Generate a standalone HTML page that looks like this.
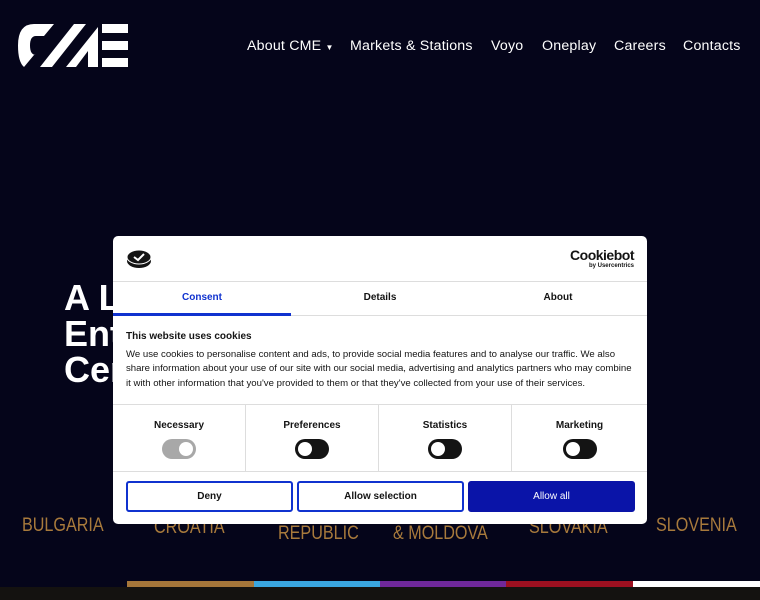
<!DOCTYPE html>
<html><head><style>
*{margin:0;padding:0;box-sizing:border-box}
body{width:760px;height:600px;background:#05051a;font-family:"Liberation Sans",sans-serif;position:relative;overflow:hidden;color:#fff}
.nav{position:absolute;top:38px;font-size:14.2px;color:#fff;letter-spacing:0.2px}
.hero{position:absolute;left:64px;top:280px;font-size:36px;font-weight:bold;line-height:36px;color:#fff}
.c{position:absolute;top:516px;font-size:19px;color:#a87a3c;text-align:center;line-height:20px;transform:scaleX(0.85);transform-origin:left top}
.bar{position:absolute;top:581px;height:6px}
.dlg{position:absolute;left:113px;top:236px;width:534px;height:288px;background:#fff;border-radius:5px;color:#141414}
.tab{position:absolute;top:56px;font-size:10px;font-weight:bold;width:178px;text-align:center}
.tg{position:absolute;top:168px;height:68px;width:133px;border-right:1px solid #ddd;text-align:center;font-size:10px;font-weight:bold;padding-top:16px}
.sw{width:34px;height:20px;border-radius:10px;background:#141414;margin:8px auto 0;position:relative}
.sw i{position:absolute;left:3px;top:3px;width:14px;height:14px;border-radius:50%;background:#fff}
.btn{position:absolute;top:245px;width:167px;height:31px;border:2px solid #1032cf;border-radius:3px;font-size:10px;font-weight:bold;text-align:center;line-height:27px}
</style></head><body>
<svg style="position:absolute;left:18px;top:24px" width="110" height="43" viewBox="0 0 110 43">
<path d="M16 0H36L26 12H18Q12 12 12 21.5Q12 31 18 31H16L6 43Q0 38 0 21.5Q0 0 16 0Z" fill="#fff"/>
<path d="M22 43L56 0H68L34 43Z" fill="#fff"/>
<path d="M48 43L80 3V43H70V27L58 43Z" fill="#fff"/>
<rect x="84" y="0" width="26" height="9" fill="#fff"/><rect x="84" y="17" width="26" height="9" fill="#fff"/><rect x="84" y="34" width="26" height="9" fill="#fff"/>
</svg>
<div class="nav" style="left:247px">About CME <span style="font-size:8px">▼</span></div>
<div class="nav" style="left:350px">Markets &amp; Stations</div>
<div class="nav" style="left:491px">Voyo</div>
<div class="nav" style="left:542px">Oneplay</div>
<div class="nav" style="left:614px">Careers</div>
<div class="nav" style="left:683px">Contacts</div>
<div class="hero">A Leading<br>Entertainment<br>Central Europe</div>
<div class="c" style="left:22px">BULGARIA</div>
<div class="c" style="left:154px;top:518px">CROATIA</div>
<div class="c" style="left:278px;top:504px">CZECH<br>REPUBLIC</div>
<div class="c" style="left:393px;top:504px">ROMANIA<br>&amp; MOLDOVA</div>
<div class="c" style="left:529px;top:518px">SLOVAKIA</div>
<div class="c" style="left:656px">SLOVENIA</div>
<div class="bar" style="left:127px;width:127px;background:#a5763a"></div>
<div class="bar" style="left:254px;width:126px;background:#3aa6e0"></div>
<div class="bar" style="left:380px;width:126px;background:#70289a"></div>
<div class="bar" style="left:506px;width:127px;background:#9c1020"></div>
<div class="bar" style="left:633px;width:127px;background:#fff"></div>
<div style="position:absolute;left:0;top:587px;width:760px;height:13px;background:#141210"></div>
<div class="dlg">
<svg style="position:absolute;left:13px;top:13px" width="26" height="20" viewBox="0 0 26 20"><ellipse cx="13" cy="12" rx="12" ry="7" fill="#141414"/><ellipse cx="13" cy="8" rx="12" ry="7" fill="#141414" stroke="#fff" stroke-width="1"/><path d="M8 8L12 11L18 5" stroke="#fff" stroke-width="2" fill="none"/></svg>
<div style="position:absolute;right:13px;top:12px;text-align:right;line-height:9px"><div style="font-size:14px;font-weight:bold;letter-spacing:-0.5px;line-height:14px">Cookiebot</div><div style="font-size:6px;font-weight:bold">by Usercentrics</div></div>
<div style="position:absolute;left:0;top:45px;width:534px;border-top:1px solid #ddd"></div>
<div class="tab" style="left:0;color:#1032cf">Consent</div>
<div class="tab" style="left:178px">Details</div>
<div class="tab" style="left:356px">About</div>
<div style="position:absolute;left:0;top:79px;width:534px;border-top:1px solid #ddd"></div>
<div style="position:absolute;left:0;top:77px;width:178px;height:3px;background:#1032cf"></div>
<div style="position:absolute;left:13px;top:95px;font-size:10px;font-weight:bold">This website uses cookies</div>
<div style="position:absolute;left:13px;top:112px;width:510px;font-size:9.6px;line-height:14.3px">We use cookies to personalise content and ads, to provide social media features and to analyse our traffic. We also share information about your use of our site with our social media, advertising and analytics partners who may combine it with other information that you've provided to them or that they've collected from your use of their services.</div>
<div style="position:absolute;left:0;top:168px;width:534px;height:68px;border-top:1px solid #ddd;border-bottom:1px solid #ddd"></div>
<div class="tg" style="left:0">Necessary<div class="sw" style="background:#a8a8a8"><i style="left:17px"></i></div></div>
<div class="tg" style="left:133px">Preferences<div class="sw"><i></i></div></div>
<div class="tg" style="left:266px">Statistics<div class="sw"><i></i></div></div>
<div class="tg" style="left:400px;border:none">Marketing<div class="sw"><i></i></div></div>
<div class="btn" style="left:13px">Deny</div>
<div class="btn" style="left:184px">Allow selection</div>
<div class="btn" style="left:355px;background:#0a14a8;border-color:#0a14a8;color:#fff;font-weight:normal">Allow all</div>
</div>
</body></html>
